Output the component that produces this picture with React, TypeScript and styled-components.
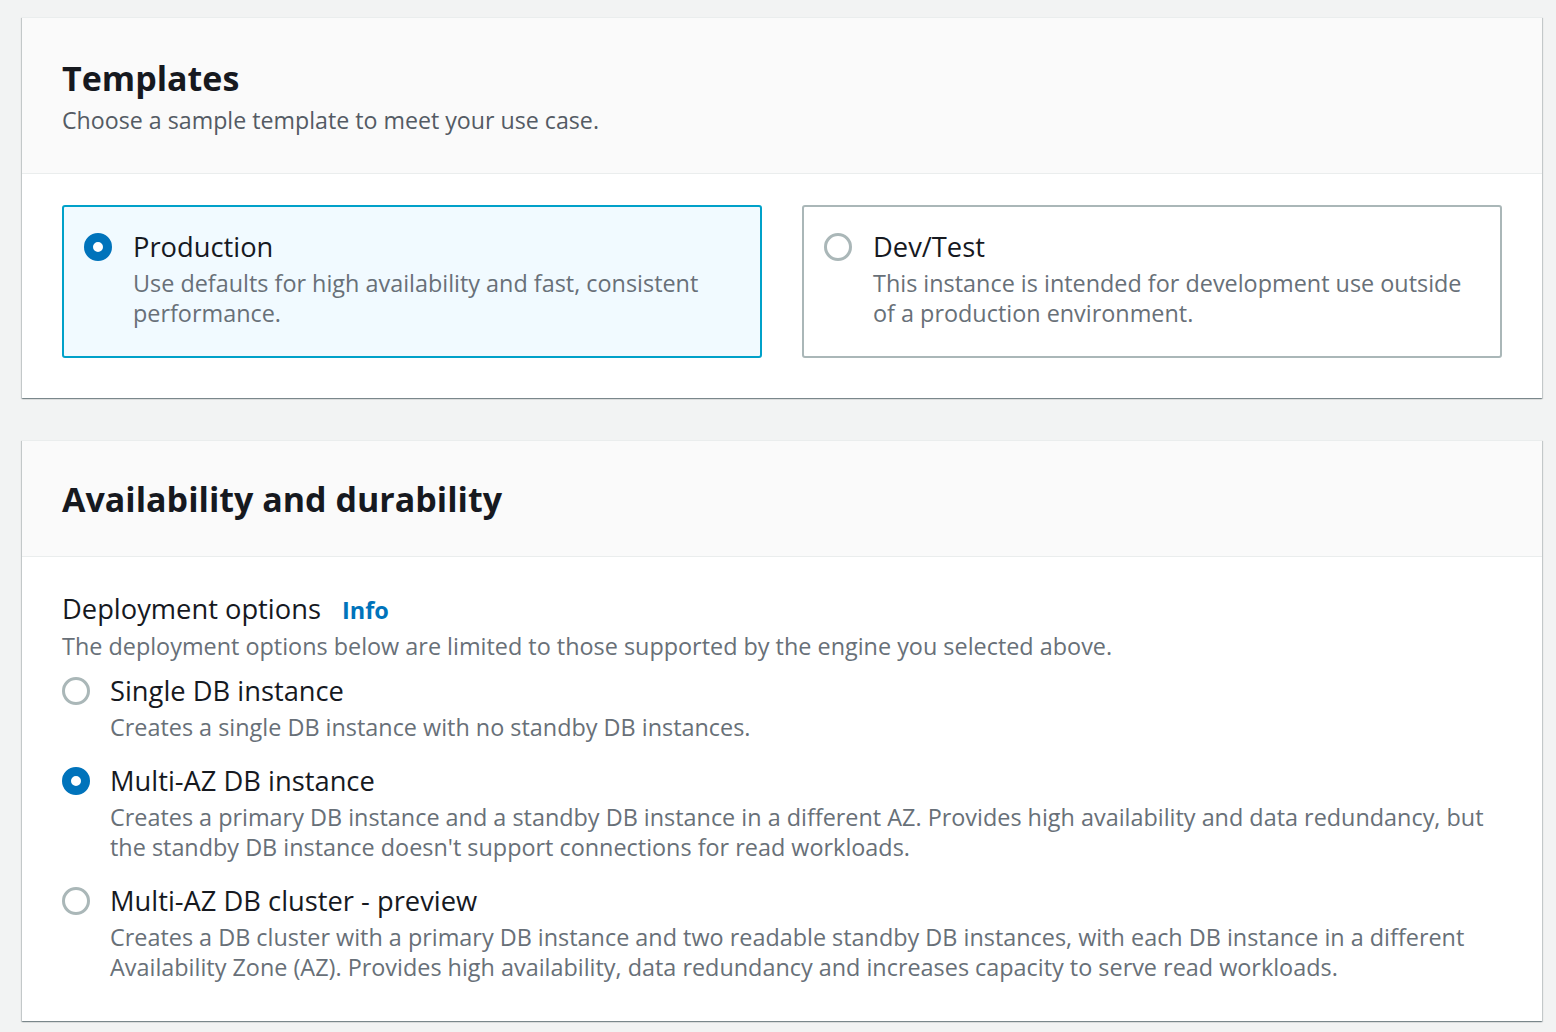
import styled, { createGlobalStyle } from "styled-components";

const GlobalStyle = createGlobalStyle`
    body {
        margin: 0;
        background: #f2f3f3;
        font-family: "Open Sans", "Noto Sans", sans-serif;
        color: #16191f;
    }
`

type TileOption = { id: string; label: string; description: string };

const templates: TileOption[] = [
    {
        id: "production",
        label: "Production",
        description: "Use defaults for high availability and fast, consistent performance.",
    },
    {
        id: "devtest",
        label: "Dev/Test",
        description: "This instance is intended for development use outside of a production environment.",
    },
];

const deployments: TileOption[] = [
    {
        id: "single",
        label: "Single DB instance",
        description: "Creates a single DB instance with no standby DB instances.",
    },
    {
        id: "multi-instance",
        label: "Multi-AZ DB instance",
        description:
            "Creates a primary DB instance and a standby DB instance in a different AZ. Provides high availability and data redundancy, but the standby DB instance doesn't support connections for read workloads.",
    },
    {
        id: "multi-cluster",
        label: "Multi-AZ DB cluster - preview",
        description:
            "Creates a DB cluster with a primary DB instance and two readable standby DB instances, with each DB instance in a different Availability Zone (AZ). Provides high availability, data redundancy and increases capacity to serve read workloads.",
    },
];

export default function App() {
    const template = "production";
    const deployment = "multi-instance";

    return (
        <Page>
            <GlobalStyle />
            <Card>
                <CardHeader>
                    <Title>Templates</Title>
                    <Subtitle>Choose a sample template to meet your use case.</Subtitle>
                </CardHeader>
                <CardBody $top={31} $bottom={40}>
                    <TileGrid>
                        {templates.map((t) => (
                            <Tile key={t.id} $selected={t.id === template}>
                                <Radio $checked={t.id === template} />
                                <OptionText>
                                    <Label>{t.label}</Label>
                                    <Description>{t.description}</Description>
                                </OptionText>
                            </Tile>
                        ))}
                    </TileGrid>
                </CardBody>
            </Card>

            <Card>
                <CardHeader $compact>
                    <Title>Availability and durability</Title>
                </CardHeader>
                <CardBody $top={34} $bottom={39}>
                    <FieldLabel>
                        Deployment options <InfoLink href="#">Info</InfoLink>
                    </FieldLabel>
                    <FieldHint>
                        The deployment options below are limited to those supported by the engine you selected above.
                    </FieldHint>
                    <RadioList>
                        {deployments.map((d) => (
                            <RadioRow key={d.id}>
                                <Radio $checked={d.id === deployment} />
                                <OptionText>
                                    <Label>{d.label}</Label>
                                    <Description>{d.description}</Description>
                                </OptionText>
                            </RadioRow>
                        ))}
                    </RadioList>
                </CardBody>
            </Card>
        </Page>
    );
}

const Page = styled.div`
    display: flex;
    flex-direction: column;
    gap: 42px;
    padding: 17px 14px 11px 22px;
`

const Card = styled.section`
    background: #fff;
    border-top: 1px solid #eaeded;
    box-shadow: 0 1px 1px 0 rgba(0, 28, 36, 0.3), 1px 1px 1px 0 rgba(0, 28, 36, 0.15),
        -1px 1px 1px 0 rgba(0, 28, 36, 0.15);
`

const CardHeader = styled.header<{ $compact?: boolean }>`
    background: #fafafa;
    border-bottom: 1px solid #eaeded;
    padding: ${(p) => (p.$compact ? "36px 40px 35px" : "38px 40px 38px")};
`

const Title = styled.h2`
    margin: 0;
    font-size: 34px;
    line-height: 44px;
    font-weight: 700;
    color: #16191f;
`

const Subtitle = styled.p`
    margin: 5px 0 0;
    font-size: 23.2px;
    line-height: 30px;
    color: #545b64;
`

const CardBody = styled.div<{ $top: number; $bottom: number }>`
    padding: ${(p) => `${p.$top}px 40px ${p.$bottom}px`};
`

const TileGrid = styled.div`
    display: grid;
    grid-template-columns: 1fr 1fr;
    gap: 40px;
`

const Tile = styled.label<{ $selected?: boolean }>`
    display: flex;
    gap: 21px;
    padding: 22px 20px 28px;
    border: 2px solid ${(p) => (p.$selected ? "#00a1c9" : "#aab7b8")};
    border-radius: 3px;
    background: ${(p) => (p.$selected ? "#f1faff" : "#fff")};
`

const Radio = styled.span<{ $checked?: boolean }>`
    flex: none;
    box-sizing: border-box;
    width: 28px;
    height: 28px;
    margin-top: 4px;
    border-radius: 50%;
    border: ${(p) => (p.$checked ? "9px solid #0073bb" : "3px solid #aab7b8")};
    background: #fff;
`

const OptionText = styled.div`
    display: flex;
    flex-direction: column;
    min-width: 0;
`

const Label = styled.span`
    font-size: 27.3px;
    line-height: 36px;
    color: #16191f;
`

const Description = styled.span`
    margin-top: 3px;
    font-size: 23.4px;
    line-height: 30px;
    color: #687078;
`

const FieldLabel = styled.div`
    font-size: 27.3px;
    line-height: 36px;
    color: #16191f;
`

const InfoLink = styled.a`
    margin-left: 14px;
    font-size: 23.5px;
    font-weight: 700;
    color: #0073bb;
    text-decoration: none;
`

const FieldHint = styled.p`
    margin: 3px 0 0;
    font-size: 23.4px;
    line-height: 30px;
    color: #687078;
`

const RadioList = styled.div`
    display: flex;
    flex-direction: column;
    gap: 21px;
    margin-top: 12px;
`

const RadioRow = styled.label`
    display: flex;
    gap: 20px;
`
